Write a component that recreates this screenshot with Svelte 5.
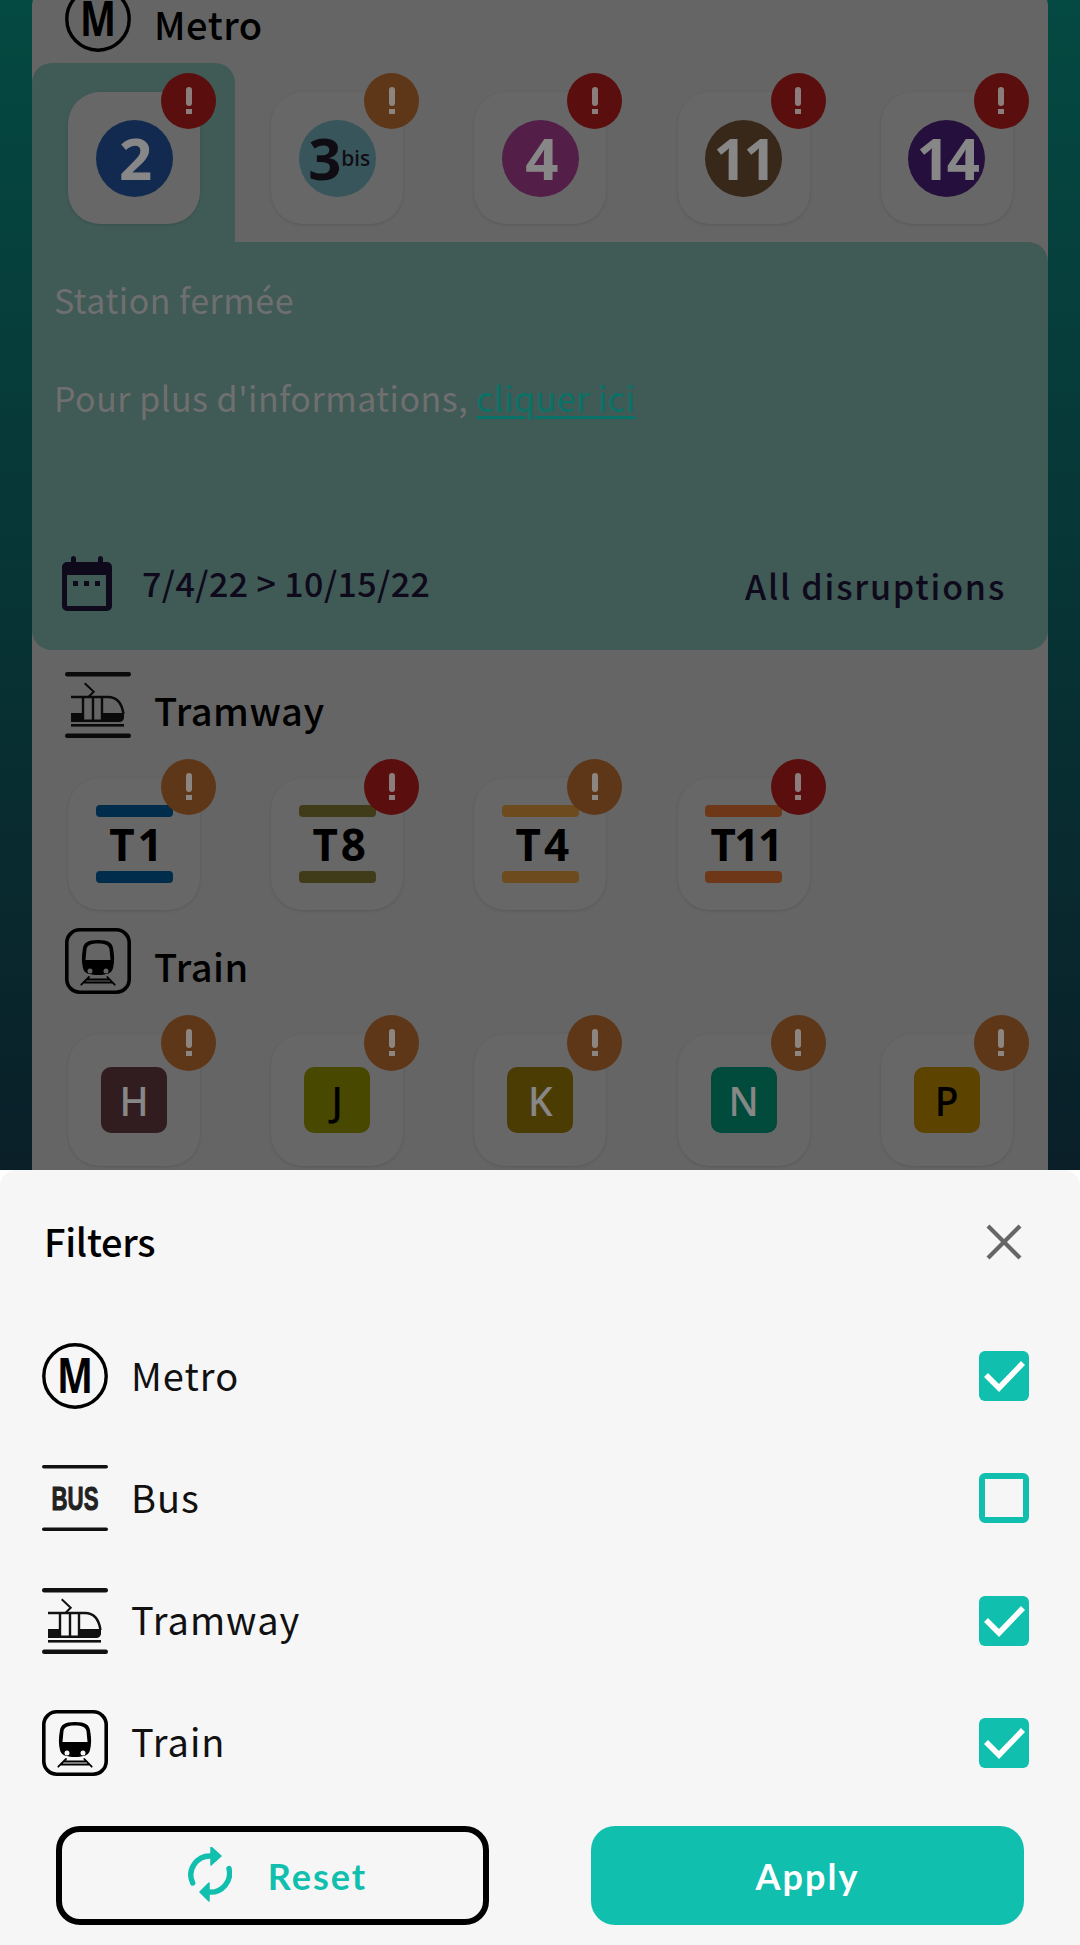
<script>
  const metro = [
    { label: "2", color: "#214685", ink: "#e2e2e2", level: "red" },
    { label: "3", sup: "bis", color: "#5c8e96", ink: "#1a1420", level: "orange" },
    { label: "4", color: "#8a3578", ink: "#e2e2e2", level: "red" },
    { label: "11", color: "#5c432a", ink: "#e2e2e2", level: "red" },
    { label: "14", color: "#3f1964", ink: "#e2e2e2", level: "red" },
  ];
  const tram = [
    { label: "T1", color: "#004b7d", level: "orange" },
    { label: "T8", color: "#6c642a", level: "red" },
    { label: "T4", color: "#b77d32", level: "orange" },
    { label: "T11", color: "#b85c28", level: "red" },
  ];
  const train = [
    { label: "H", color: "#532f35", ink: "#e2e2e2" },
    { label: "J", color: "#787800", ink: "#000" },
    { label: "K", color: "#7d6408", ink: "#e2e2e2" },
    { label: "N", color: "#007d64", ink: "#e2e2e2" },
    { label: "P", color: "#997100", ink: "#000" },
  ];

  let filters = $state([
    { id: "metro", label: "Metro", checked: true },
    { id: "bus", label: "Bus", checked: false },
    { id: "tram", label: "Tramway", checked: true },
    { id: "train", label: "Train", checked: true },
  ]);
</script>

{#snippet modeIcon(kind)}
  <svg class="mode-icon" viewBox="0 0 66 66" aria-hidden="true">
    {#if kind === "metro"}
      <circle cx="33" cy="33" r="31.2" fill="none" stroke="#000" stroke-width="3.4" />
      <text x="33" y="50" class="logo-m" text-anchor="middle" textLength="36" lengthAdjust="spacingAndGlyphs">M</text>
    {:else if kind === "bus"}
      <rect x="0" y="0" width="66" height="3.6" rx="1.8" fill="#111" />
      <rect x="0" y="62.4" width="66" height="3.6" rx="1.8" fill="#111" />
      <text x="33" y="45" class="logo-bus" text-anchor="middle" textLength="47" lengthAdjust="spacingAndGlyphs">BUS</text>
    {:else if kind === "tram"}
      <rect x="0" y="0" width="66" height="4.4" rx="2.2" fill="#111" />
      <rect x="0" y="61.6" width="66" height="4.4" rx="2.2" fill="#111" />
      <rect x="6" y="52" width="53" height="2.6" fill="#111" />
      <path d="M19.7 11.3 28.7 19.7 23.7 24.7" fill="none" stroke="#111" stroke-width="2" />
      <path d="M6 25H43C52 25 57 32 58.5 42M18 25V48M28 25V48M37 25V48" fill="none" stroke="#111" stroke-width="2.4" />
      <path d="M6 41H19V47.5H36V41H59V45.5C59 48 57 50 54 50H6Z" fill="#111" />
    {:else}
      <rect x="1.8" y="1.8" width="62.4" height="62.4" rx="13" fill="none" stroke="#000" stroke-width="3.6" />
      <path
        fill="#000"
        fill-rule="evenodd"
        d="M33 12C22 12 19 15 18 20 16.5 28 16.5 34 18 40 19 45 24 47 33 47 42 47 47 45 48 40 49.5 34 49.5 28 48 20 47 15 44 12 33 12ZM33 15.5C26 15.5 22.5 17 21.5 21L20.5 32H45.5L44.5 21C43.5 17 40 15.5 33 15.5ZM25 40.5A2.5 2.5 0 1 0 25 45.5 2.5 2.5 0 1 0 25 40.5ZM41 40.5A2.5 2.5 0 1 0 41 45.5 2.5 2.5 0 1 0 41 40.5Z"
      />
      <path d="M16.3 56.7 24 49M49.7 56.7 42.3 49M22 51.5H44M18.5 54.5H47.5" fill="none" stroke="#000" stroke-width="1.8" stroke-linecap="round" />
    {/if}
  </svg>
{/snippet}

{#snippet alert(level)}
  <span class="alert {level}">
    <span class="alert-stem"></span>
    <span class="alert-dot"></span>
  </span>
{/snippet}

<div class="page">
  <section class="card">
    <header class="mode-head">
      {@render modeIcon("metro")}
      <h2>Metro</h2>
    </header>
    <div class="line-row">
      {#each metro as line, i}
        <div class="cell" class:selected={i === 0}>
          <div class="tile">
            <span class="roundel" class:has-sup={line.sup} style:background={line.color} style:color={line.ink}>
              {line.label}{#if line.sup}<sup>{line.sup}</sup>{/if}
            </span>
            {@render alert(line.level)}
          </div>
        </div>
      {/each}
    </div>
    <div class="detail">
      <p class="detail-text">Station fermée</p>
      <p class="detail-text more">Pour plus d'informations, <a href="#more">cliquer ici</a></p>
      <div class="detail-foot">
        <svg class="calendar" viewBox="0 0 50 55" aria-hidden="true">
          <path
            fill="#1a1030"
            fill-rule="evenodd"
            d="M9 2.5A2.5 2.5 0 0 1 14 2.5V6H36V2.5A2.5 2.5 0 0 1 41 2.5V6H45A5 5 0 0 1 50 11V50A5 5 0 0 1 45 55H5A5 5 0 0 1 0 50V11A5 5 0 0 1 5 6H9ZM5 19V50H44V19ZM11 25H16V30H11ZM22 25H27V30H22ZM33 25H38V30H33Z"
          />
        </svg>
        <span class="dates">7/4/22 &gt; 10/15/22</span>
        <span class="all">All disruptions</span>
      </div>
    </div>

    <header class="mode-head tram-head">
      {@render modeIcon("tram")}
      <h2>Tramway</h2>
    </header>
    <div class="line-row">
      {#each tram as line}
        <div class="cell">
          <div class="tile">
            <span class="tram-badge">
              <i style:background={line.color}></i>
              <b class:tight={line.label.length > 2}>{line.label}</b>
              <i style:background={line.color}></i>
            </span>
            {@render alert(line.level)}
          </div>
        </div>
      {/each}
    </div>

    <header class="mode-head">
      {@render modeIcon("train")}
      <h2>Train</h2>
    </header>
    <div class="line-row">
      {#each train as line}
        <div class="cell">
          <div class="tile">
            <span class="square" style:background={line.color} style:color={line.ink}>{line.label}</span>
            {@render alert("orange")}
          </div>
        </div>
      {/each}
    </div>
  </section>

  <div class="scrim"></div>

  <aside class="sheet">
    <div class="sheet-inner">
      <div class="sheet-head">
        <h3>Filters</h3>
        <button class="close" aria-label="Close">
          <svg viewBox="0 0 50 50" aria-hidden="true">
            <path d="M9 9 41 41M41 9 9 41" stroke="#666" stroke-width="4.2" fill="none" />
          </svg>
        </button>
      </div>
      <ul class="filter-list">
        {#each filters as filter (filter.id)}
          <li class="filter">
            {@render modeIcon(filter.id)}
            <span class="filter-label">{filter.label}</span>
            <button
              class="check"
              class:on={filter.checked}
              role="checkbox"
              aria-checked={filter.checked}
              aria-label={filter.label}
              onclick={() => (filter.checked = !filter.checked)}
            >
              {#if filter.checked}
                <svg viewBox="0 0 50 50" aria-hidden="true">
                  <path d="M7 24 20 37 44 12" fill="none" stroke="#fff" stroke-width="5.6" />
                </svg>
              {/if}
            </button>
          </li>
        {/each}
      </ul>
      <div class="actions">
        <button class="btn reset">
          <svg class="sync" viewBox="0 0 44 57" aria-hidden="true">
            <path d="M4.7 36A19 19 0 0 1 23 9M41 21.5A19 19 0 0 1 21 45" fill="none" stroke="#10bfad" stroke-width="5.4" stroke-linecap="round" />
            <path d="M23 0 33 9 23 18ZM21 36 12 45 21 54Z" fill="#10bfad" stroke="#10bfad" stroke-width="1.5" stroke-linejoin="round" />
          </svg>
          Reset
        </button>
        <button class="btn apply">Apply</button>
      </div>
    </div>
  </aside>
</div>

<style>
  :global(body) {
    font-family: "Noto Sans CJK JP", "Noto Sans", sans-serif;
  }

  .page {
    position: relative;
    height: 1945px;
    overflow: hidden;
    padding: 0 32px;
    box-sizing: border-box;
    background: linear-gradient(180deg, #087b6e 0%, #113544 60%, #113544 100%);
  }

  .card {
    margin-top: -14px;
    background: #a8a8a8;
    border-radius: 20px;
    min-height: 1300px;
  }

  .mode-head {
    display: flex;
    align-items: center;
    gap: 23px;
    height: 66px;
    padding-left: 33px;
    margin-bottom: 11px;
  }

  .tram-head {
    margin-top: 22px;
  }

  .mode-head h2 {
    margin: 0;
    font-size: 38px;
    font-weight: 500;
    letter-spacing: 0.5px;
    color: #000;
    position: relative;
    top: 4px;
  }

  .mode-icon {
    display: block;
    width: 66px;
    height: 66px;
    flex: none;
  }

  .logo-m {
    font-family: "Noto Sans", sans-serif;
    font-size: 49px;
    font-weight: 700;
    fill: #000;
  }

  .logo-bus {
    font-family: "Liberation Sans", sans-serif;
    font-size: 33px;
    font-weight: 700;
    fill: #222;
    stroke: #222;
    stroke-width: 1;
  }

  .line-row {
    display: grid;
    grid-template-columns: repeat(5, 203.2px);
  }

  .cell {
    padding: 29px 35px 18px 36px;
    border-radius: 20px 20px 0 0;
  }

  .cell.selected {
    background: #6b968f;
  }

  .tile {
    position: relative;
    width: 132px;
    height: 132px;
    display: flex;
    align-items: center;
    justify-content: center;
    background: #acacac;
    border-radius: 32px;
    box-shadow: 0 1px 3px rgba(0, 0, 0, 0.12);
  }

  .alert {
    position: absolute;
    top: -19px;
    right: -16px;
    width: 55px;
    height: 56px;
    border-radius: 50%;
    display: flex;
    flex-direction: column;
    align-items: center;
    padding-top: 14px;
    box-sizing: border-box;
    gap: 3px;
  }

  .alert.red {
    background: #961a18;
  }

  .alert.orange {
    background: #9d5c2a;
  }

  .alert-stem {
    width: 6px;
    height: 19px;
    border-radius: 3px;
    background: #fff;
    opacity: 0.8;
  }

  .alert-dot {
    width: 6px;
    height: 5px;
    background: #fff;
    opacity: 0.8;
  }

  .roundel {
    width: 77px;
    height: 77px;
    border-radius: 50%;
    display: flex;
    align-items: center;
    justify-content: center;
    font-family: "Open Sans", sans-serif;
    font-size: 58px;
    font-weight: 700;
    letter-spacing: -3px;
    line-height: 1;
  }

  .roundel.has-sup {
    padding-left: 4px;
    box-sizing: border-box;
  }

  .roundel sup {
    font-family: "Noto Sans", sans-serif;
    font-size: 21px;
    font-weight: 500;
    letter-spacing: 0;
    margin-left: 3px;
    vertical-align: baseline;
    position: relative;
    top: 0;
  }

  .detail {
    background: #6b968f;
    border-radius: 0 20px 20px 20px;
    height: 408px;
    box-sizing: border-box;
    padding: 33px 42px 0 22px;
    display: flex;
    flex-direction: column;
  }

  .detail-text {
    margin: 0;
    font-size: 34px;
    line-height: 50px;
    letter-spacing: 0.5px;
    color: #b9b9b9;
    height: 50px;
  }

  .more {
    margin-top: 48px;
  }

  .more a {
    color: #10bfad;
    text-underline-offset: 4px;
  }

  .detail-foot {
    display: flex;
    align-items: center;
    margin-top: auto;
    margin-bottom: 39px;
    padding-left: 8px;
    font-size: 34px;
    font-weight: 500;
    color: #1a1030;
  }

  .calendar {
    width: 50px;
    height: 55px;
    flex: none;
    margin-right: 30px;
  }

  .dates {
    letter-spacing: 0.4px;
    position: relative;
    top: -1px;
  }

  .all {
    margin-left: auto;
    letter-spacing: 1.8px;
    position: relative;
    top: 2px;
  }

  .tram-badge {
    width: 77px;
    display: flex;
    flex-direction: column;
    align-items: center;
  }

  .tram-badge i {
    display: block;
    width: 77px;
    height: 12px;
    border-radius: 4px;
  }

  .tram-badge b {
    font-family: "Noto Sans", sans-serif;
    font-size: 44px;
    font-weight: 700;
    line-height: 54px;
    letter-spacing: 3px;
    padding-left: 7px;
    color: #000;
    white-space: nowrap;
  }

  .tram-badge b.tight {
    letter-spacing: -1.5px;
    padding-left: 5px;
  }

  .square {
    width: 66px;
    height: 66px;
    border-radius: 10px;
    display: flex;
    align-items: center;
    justify-content: center;
    font-family: "Noto Sans", sans-serif;
    font-size: 39px;
    font-weight: 500;
  }

  .scrim {
    position: absolute;
    inset: 0;
    background: rgba(0, 0, 0, 0.4);
  }

  .sheet {
    position: absolute;
    left: 0;
    right: 0;
    bottom: 0;
    height: 775px;
    background: #fff;
  }

  .sheet-inner {
    height: 100%;
    box-sizing: border-box;
    background: #f6f6f6;
    border-radius: 16px 16px 0 0;
    padding: 48px 51px 20px 42px;
    display: flex;
    flex-direction: column;
  }

  .sheet-head {
    display: flex;
    align-items: center;
    justify-content: space-between;
    height: 48px;
    margin-bottom: 77px;
  }

  .sheet-head h3 {
    margin: 0 0 4px 2px;
    font-size: 38px;
    font-weight: 500;
    letter-spacing: -0.3px;
    color: #000;
  }

  .close {
    width: 50px;
    height: 50px;
    padding: 0;
    border: 0;
    background: none;
  }

  .close svg {
    display: block;
  }

  .filter-list {
    list-style: none;
    margin: 0;
    padding: 0;
    display: flex;
    flex-direction: column;
    gap: 56.3px;
  }

  .filter {
    display: flex;
    align-items: center;
    gap: 23px;
    height: 66px;
  }

  .filter-label {
    flex: 1;
    font-size: 38px;
    letter-spacing: 1px;
    color: #111;
    position: relative;
    top: -2px;
  }

  .check {
    width: 50px;
    height: 50px;
    padding: 0;
    box-sizing: border-box;
    border: 6px solid #10bfad;
    border-radius: 6px;
    background: none;
    overflow: hidden;
  }

  .check.on {
    border: 0;
    background: #10bfad;
  }

  .check svg {
    display: block;
  }

  .actions {
    display: flex;
    justify-content: space-between;
    margin: auto 5px 0 14px;
  }

  .btn {
    width: 433px;
    height: 99px;
    box-sizing: border-box;
    border-radius: 24px;
    font-family: Lato, sans-serif;
    font-size: 36px;
    font-weight: 700;
    letter-spacing: 2px;
    display: flex;
    align-items: center;
    justify-content: center;
  }

  .reset {
    gap: 36px;
    padding-left: 16px;
    color: #10bfad;
    background: none;
    border: 6px solid #000;
  }

  .sync {
    width: 44px;
    height: 57px;
  }

  .apply {
    color: #fff;
    background: #10bfad;
    border: 0;
  }
</style>
